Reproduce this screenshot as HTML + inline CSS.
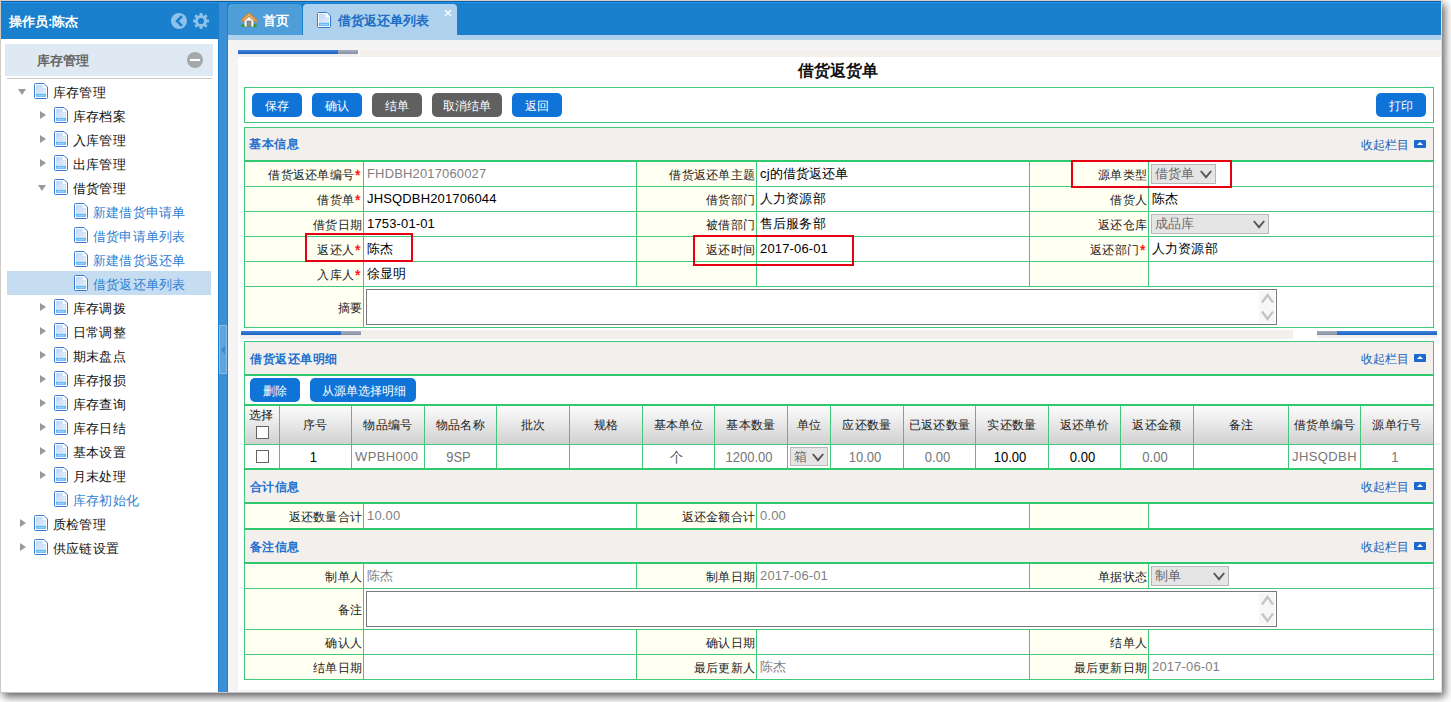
<!DOCTYPE html>
<html><head><meta charset="utf-8">
<style>
*{box-sizing:border-box;margin:0;padding:0}
html,body{width:1451px;height:702px;overflow:hidden;background:#fff;font-family:"Liberation Sans",sans-serif;font-size:12px;color:#111}
.abs{position:absolute}
#frame-top{left:0;top:0;width:1443px;height:1px;background:#d6d0c8}
#frame-left{left:0;top:0;width:1px;height:693px;background:#cfcac4}
#shadowbox{left:0;top:0;width:1442px;height:693px;background:#fff;box-shadow:3px 4px 8px 0 rgba(0,0,0,.6)}
#frame-right{left:1441px;top:0;width:1px;height:693px;background:#e2deda}
#frame-bottom{left:0;top:692px;width:1442px;height:1px;background:#c4c4c4}
#win{left:1px;top:1px;width:1440px;height:691px;background:#fff;overflow:hidden}
/* all coordinates inside #win are offset by 1 */
#topline1{left:0;top:0;width:1441px;height:1px;background:#0b5ea6}
#topline2{left:0;top:1px;width:1441px;height:1px;background:#2594e8}
#sbhead{left:0;top:2px;width:217px;height:36px;background:#1a7fcc;color:#fff;font-weight:bold;font-size:13px}
#sbhead .t{position:absolute;left:8px;top:11px;line-height:15px}
#splitter{left:217px;top:2px;width:10px;height:690px;background:#3b8fd5;border-left:1px solid #1c7fd0;border-right:1px solid #1c7fd0}
#tabbar{left:227px;top:2px;width:1214px;height:32px;background:#1a7fcc}
.tab{position:absolute;top:1px;height:32px;border-radius:4px 4px 0 0;font-weight:bold;font-size:13px;line-height:15px}
#tab1{left:0;width:74px;background:#4f9dd9;color:#fff}
#tab2{left:75px;width:154px;background:#aed2ee;color:#1a6ec4}
#bluband{left:227px;top:34px;width:1214px;height:5px;background:#aed2ee}
#content{left:227px;top:39px;width:1214px;height:653px;background:#f4f4f4}
#panel{left:237px;top:56px;width:1204px;height:633px;background:#fff}
#sidebar{left:0;top:38px;width:217px;height:654px;background:#fff}
#acc{left:4px;top:5px;width:208px;height:32px;background:#dfe9f3;color:#666;font-size:13px;font-weight:bold}
#accline{left:6px;top:39px;width:205px;height:1px;background:#c8c8c8}
.row{position:absolute;left:0;width:217px;height:24px;font-size:13px;line-height:24px;white-space:nowrap}
.row .tx{position:absolute;top:2px;letter-spacing:0.2px}
.row.sel{left:6px;width:204px;background:#c6ddf1}
.leaf{color:#2f80d2}
.tri-d{position:absolute;width:0;height:0;border-left:4.5px solid transparent;border-right:4.5px solid transparent;border-top:6px solid #999;top:10px}
.tri-r{position:absolute;width:0;height:0;border-top:4.5px solid transparent;border-bottom:4.5px solid transparent;border-left:6px solid #999;top:8px}
.doc{position:absolute;top:4px;width:14px;height:16px}
.bar{position:absolute;height:4px}
.gb{border:1px solid #41c87a}
.btn{position:absolute;top:5px;height:24px;border-radius:5px;color:#fff;font-size:12px;line-height:24px;text-align:center}
.bb{background:#0e6fd4}
.bg{background:#606060}
.sec{position:absolute;left:243px;width:1190px;border:1px solid #41c87a;background:#fff}
.sh{position:relative;height:32px;background:#f2efec;border-bottom:2px solid #41c87a}
.sh .t{position:absolute;left:5px;top:9px;color:#2b6fc6;font-weight:bold;font-size:13px;line-height:15px}
.sh .c{position:absolute;right:7px;top:9px;color:#2060b8;font-size:12px;line-height:15px}
.sh .c i{display:inline-block;width:12px;height:8px;background:#1c6ad0;margin-left:5px;vertical-align:1px;position:relative;border-radius:1px}
.sh .c i:after{content:"";position:absolute;left:3px;top:2px;border-left:3px solid transparent;border-right:3px solid transparent;border-bottom:3px solid #fff}
table.f{border-collapse:collapse;table-layout:fixed;width:1190px}
table.f td{border:1px solid #41c87a;height:25px;padding:0 4px;font-size:13px;white-space:nowrap;overflow:hidden}
table.f tr:first-child td{border-top:0}
table.f td:first-child{border-left:0}
table.f td:last-child{border-right:0}
table.f tr:last-child td{border-bottom:0}
table.f td.l{background:#fffff0;text-align:right;font-size:12px;padding:0 2px 0 0;color:#222}
.req{color:#f00}
.gray{color:#777}
.sel-box{display:inline-block;height:20px;border:1px solid #b5b5b5;background:#e6e6e6;color:#888;font-size:13px;line-height:18px;padding-left:3px;position:relative;vertical-align:middle}
.sel-box:after{content:"";position:absolute;right:6px;top:4px;width:7px;height:7px;border-right:2px solid #555;border-bottom:2px solid #555;transform:rotate(45deg)}
.ta{display:block;height:37px;border:1px solid #777;background:#fff;position:relative;margin-left:0}
.redbox{position:absolute;border:2px solid #e0141e}

.tx{position:absolute;white-space:nowrap}
.lab{font-size:12px;line-height:14px;color:#1a1a1a;letter-spacing:0.25px}
.val{font-size:13px;line-height:16px;color:#000;letter-spacing:0.15px}
.val.gray{color:#7f7f7f}
.num{font-size:14px;line-height:16px;transform:scaleX(.93)}
.req{color:#f00;font-size:14px;line-height:14px;-webkit-text-stroke:0.3px #f00}
.btn{position:absolute;border-radius:5px;color:#fff;font-size:12px;line-height:26px;text-align:center}
.selbox{position:absolute;height:20px;border:1px solid #b8b8b8;background:#e5e5e5;color:#6a6a6a;font-size:13px;line-height:18px;padding-left:3px;box-sizing:border-box}
.ta{position:absolute;border:1px solid #7a7a7a;background:#fff;box-sizing:border-box}
.cb{position:absolute;width:13px;height:13px;border:1px solid #666;background:#fff;box-sizing:border-box}
.cico{position:absolute;width:12px;height:8px;background:#1c6ad0;border-radius:1px}
.cico:after{content:"";position:absolute;left:3px;top:2px;border-left:3px solid transparent;border-right:3px solid transparent;border-bottom:3px solid #fff}
.redbox{position:absolute;border:2px solid #e60012;box-sizing:border-box}
</style></head><body>
<svg width="0" height="0" style="position:absolute"><defs>
<linearGradient id="dg" x1="0" y1="0" x2="1" y2="1"><stop offset="0" stop-color="#c0d8f5"/><stop offset="1" stop-color="#e2eefb"/></linearGradient>

</defs></svg>
<div id="shadowbox" class="abs"></div>
<div id="frame-top" class="abs"></div>
<div id="frame-left" class="abs"></div>
<div id="frame-right" class="abs"></div>
<div id="frame-bottom" class="abs"></div>
<div id="win" class="abs">
  <div id="sidebar" class="abs">
    <div id="acc" class="abs"><span style="position:absolute;left:32px;top:9px;line-height:15px">库存管理</span>
      <span style="position:absolute;left:182px;top:8px;width:16px;height:16px;border-radius:50%;background:#a6a9ac"><span style="position:absolute;left:3px;top:7px;width:10px;height:2px;background:#fff"></span></span>
    </div>
    <div id="accline" class="abs"></div>
    <div class="row" style="top:40px"><span class="tri-d" style="left:17px"></span><svg class="doc" style="left:33px" width="14" height="16" viewBox="0 0 14 16"><path d="M1.6,0.5 H10 L13.5,4 V14.4 Q13.5,15.5 12.4,15.5 H1.6 Q0.5,15.5 0.5,14.4 V1.6 Q0.5,0.5 1.6,0.5 Z" fill="#fff" stroke="#3b78cf" stroke-width="1"/>
<path d="M2,2 H9 V5 H12 V10.8 H2 Z" fill="url(#dg)"/>
<rect x="2" y="10.8" width="10" height="3" fill="#55b2f2"/>
<rect x="3" y="11.8" width="8" height="1" fill="#a6dafc"/></svg><span class="tx" style="left:52px">库存管理</span></div>
<div class="row" style="top:64px"><span class="tri-r" style="left:39px"></span><svg class="doc" style="left:53px" width="14" height="16" viewBox="0 0 14 16"><path d="M1.6,0.5 H10 L13.5,4 V14.4 Q13.5,15.5 12.4,15.5 H1.6 Q0.5,15.5 0.5,14.4 V1.6 Q0.5,0.5 1.6,0.5 Z" fill="#fff" stroke="#3b78cf" stroke-width="1"/>
<path d="M2,2 H9 V5 H12 V10.8 H2 Z" fill="url(#dg)"/>
<rect x="2" y="10.8" width="10" height="3" fill="#55b2f2"/>
<rect x="3" y="11.8" width="8" height="1" fill="#a6dafc"/></svg><span class="tx" style="left:72px">库存档案</span></div>
<div class="row" style="top:88px"><span class="tri-r" style="left:39px"></span><svg class="doc" style="left:53px" width="14" height="16" viewBox="0 0 14 16"><path d="M1.6,0.5 H10 L13.5,4 V14.4 Q13.5,15.5 12.4,15.5 H1.6 Q0.5,15.5 0.5,14.4 V1.6 Q0.5,0.5 1.6,0.5 Z" fill="#fff" stroke="#3b78cf" stroke-width="1"/>
<path d="M2,2 H9 V5 H12 V10.8 H2 Z" fill="url(#dg)"/>
<rect x="2" y="10.8" width="10" height="3" fill="#55b2f2"/>
<rect x="3" y="11.8" width="8" height="1" fill="#a6dafc"/></svg><span class="tx" style="left:72px">入库管理</span></div>
<div class="row" style="top:112px"><span class="tri-r" style="left:39px"></span><svg class="doc" style="left:53px" width="14" height="16" viewBox="0 0 14 16"><path d="M1.6,0.5 H10 L13.5,4 V14.4 Q13.5,15.5 12.4,15.5 H1.6 Q0.5,15.5 0.5,14.4 V1.6 Q0.5,0.5 1.6,0.5 Z" fill="#fff" stroke="#3b78cf" stroke-width="1"/>
<path d="M2,2 H9 V5 H12 V10.8 H2 Z" fill="url(#dg)"/>
<rect x="2" y="10.8" width="10" height="3" fill="#55b2f2"/>
<rect x="3" y="11.8" width="8" height="1" fill="#a6dafc"/></svg><span class="tx" style="left:72px">出库管理</span></div>
<div class="row" style="top:136px"><span class="tri-d" style="left:37px"></span><svg class="doc" style="left:53px" width="14" height="16" viewBox="0 0 14 16"><path d="M1.6,0.5 H10 L13.5,4 V14.4 Q13.5,15.5 12.4,15.5 H1.6 Q0.5,15.5 0.5,14.4 V1.6 Q0.5,0.5 1.6,0.5 Z" fill="#fff" stroke="#3b78cf" stroke-width="1"/>
<path d="M2,2 H9 V5 H12 V10.8 H2 Z" fill="url(#dg)"/>
<rect x="2" y="10.8" width="10" height="3" fill="#55b2f2"/>
<rect x="3" y="11.8" width="8" height="1" fill="#a6dafc"/></svg><span class="tx" style="left:72px">借货管理</span></div>
<div class="row" style="top:160px"><svg class="doc" style="left:73px" width="14" height="16" viewBox="0 0 14 16"><path d="M1.6,0.5 H10 L13.5,4 V14.4 Q13.5,15.5 12.4,15.5 H1.6 Q0.5,15.5 0.5,14.4 V1.6 Q0.5,0.5 1.6,0.5 Z" fill="#fff" stroke="#3b78cf" stroke-width="1"/>
<path d="M2,2 H9 V5 H12 V10.8 H2 Z" fill="url(#dg)"/>
<rect x="2" y="10.8" width="10" height="3" fill="#55b2f2"/>
<rect x="3" y="11.8" width="8" height="1" fill="#a6dafc"/></svg><span class="tx leaf" style="left:92px">新建借货申请单</span></div>
<div class="row" style="top:184px"><svg class="doc" style="left:73px" width="14" height="16" viewBox="0 0 14 16"><path d="M1.6,0.5 H10 L13.5,4 V14.4 Q13.5,15.5 12.4,15.5 H1.6 Q0.5,15.5 0.5,14.4 V1.6 Q0.5,0.5 1.6,0.5 Z" fill="#fff" stroke="#3b78cf" stroke-width="1"/>
<path d="M2,2 H9 V5 H12 V10.8 H2 Z" fill="url(#dg)"/>
<rect x="2" y="10.8" width="10" height="3" fill="#55b2f2"/>
<rect x="3" y="11.8" width="8" height="1" fill="#a6dafc"/></svg><span class="tx leaf" style="left:92px">借货申请单列表</span></div>
<div class="row" style="top:208px"><svg class="doc" style="left:73px" width="14" height="16" viewBox="0 0 14 16"><path d="M1.6,0.5 H10 L13.5,4 V14.4 Q13.5,15.5 12.4,15.5 H1.6 Q0.5,15.5 0.5,14.4 V1.6 Q0.5,0.5 1.6,0.5 Z" fill="#fff" stroke="#3b78cf" stroke-width="1"/>
<path d="M2,2 H9 V5 H12 V10.8 H2 Z" fill="url(#dg)"/>
<rect x="2" y="10.8" width="10" height="3" fill="#55b2f2"/>
<rect x="3" y="11.8" width="8" height="1" fill="#a6dafc"/></svg><span class="tx leaf" style="left:92px">新建借货返还单</span></div>
<div class="row" style="top:232px;left:6px;width:204px;background:#c6ddf1"></div>
<div class="row" style="top:232px"><svg class="doc" style="left:73px" width="14" height="16" viewBox="0 0 14 16"><path d="M1.6,0.5 H10 L13.5,4 V14.4 Q13.5,15.5 12.4,15.5 H1.6 Q0.5,15.5 0.5,14.4 V1.6 Q0.5,0.5 1.6,0.5 Z" fill="#fff" stroke="#3b78cf" stroke-width="1"/>
<path d="M2,2 H9 V5 H12 V10.8 H2 Z" fill="url(#dg)"/>
<rect x="2" y="10.8" width="10" height="3" fill="#55b2f2"/>
<rect x="3" y="11.8" width="8" height="1" fill="#a6dafc"/></svg><span class="tx leaf" style="left:92px">借货返还单列表</span></div>
<div class="row" style="top:256px"><span class="tri-r" style="left:39px"></span><svg class="doc" style="left:53px" width="14" height="16" viewBox="0 0 14 16"><path d="M1.6,0.5 H10 L13.5,4 V14.4 Q13.5,15.5 12.4,15.5 H1.6 Q0.5,15.5 0.5,14.4 V1.6 Q0.5,0.5 1.6,0.5 Z" fill="#fff" stroke="#3b78cf" stroke-width="1"/>
<path d="M2,2 H9 V5 H12 V10.8 H2 Z" fill="url(#dg)"/>
<rect x="2" y="10.8" width="10" height="3" fill="#55b2f2"/>
<rect x="3" y="11.8" width="8" height="1" fill="#a6dafc"/></svg><span class="tx" style="left:72px">库存调拨</span></div>
<div class="row" style="top:280px"><span class="tri-r" style="left:39px"></span><svg class="doc" style="left:53px" width="14" height="16" viewBox="0 0 14 16"><path d="M1.6,0.5 H10 L13.5,4 V14.4 Q13.5,15.5 12.4,15.5 H1.6 Q0.5,15.5 0.5,14.4 V1.6 Q0.5,0.5 1.6,0.5 Z" fill="#fff" stroke="#3b78cf" stroke-width="1"/>
<path d="M2,2 H9 V5 H12 V10.8 H2 Z" fill="url(#dg)"/>
<rect x="2" y="10.8" width="10" height="3" fill="#55b2f2"/>
<rect x="3" y="11.8" width="8" height="1" fill="#a6dafc"/></svg><span class="tx" style="left:72px">日常调整</span></div>
<div class="row" style="top:304px"><span class="tri-r" style="left:39px"></span><svg class="doc" style="left:53px" width="14" height="16" viewBox="0 0 14 16"><path d="M1.6,0.5 H10 L13.5,4 V14.4 Q13.5,15.5 12.4,15.5 H1.6 Q0.5,15.5 0.5,14.4 V1.6 Q0.5,0.5 1.6,0.5 Z" fill="#fff" stroke="#3b78cf" stroke-width="1"/>
<path d="M2,2 H9 V5 H12 V10.8 H2 Z" fill="url(#dg)"/>
<rect x="2" y="10.8" width="10" height="3" fill="#55b2f2"/>
<rect x="3" y="11.8" width="8" height="1" fill="#a6dafc"/></svg><span class="tx" style="left:72px">期末盘点</span></div>
<div class="row" style="top:328px"><span class="tri-r" style="left:39px"></span><svg class="doc" style="left:53px" width="14" height="16" viewBox="0 0 14 16"><path d="M1.6,0.5 H10 L13.5,4 V14.4 Q13.5,15.5 12.4,15.5 H1.6 Q0.5,15.5 0.5,14.4 V1.6 Q0.5,0.5 1.6,0.5 Z" fill="#fff" stroke="#3b78cf" stroke-width="1"/>
<path d="M2,2 H9 V5 H12 V10.8 H2 Z" fill="url(#dg)"/>
<rect x="2" y="10.8" width="10" height="3" fill="#55b2f2"/>
<rect x="3" y="11.8" width="8" height="1" fill="#a6dafc"/></svg><span class="tx" style="left:72px">库存报损</span></div>
<div class="row" style="top:352px"><span class="tri-r" style="left:39px"></span><svg class="doc" style="left:53px" width="14" height="16" viewBox="0 0 14 16"><path d="M1.6,0.5 H10 L13.5,4 V14.4 Q13.5,15.5 12.4,15.5 H1.6 Q0.5,15.5 0.5,14.4 V1.6 Q0.5,0.5 1.6,0.5 Z" fill="#fff" stroke="#3b78cf" stroke-width="1"/>
<path d="M2,2 H9 V5 H12 V10.8 H2 Z" fill="url(#dg)"/>
<rect x="2" y="10.8" width="10" height="3" fill="#55b2f2"/>
<rect x="3" y="11.8" width="8" height="1" fill="#a6dafc"/></svg><span class="tx" style="left:72px">库存查询</span></div>
<div class="row" style="top:376px"><span class="tri-r" style="left:39px"></span><svg class="doc" style="left:53px" width="14" height="16" viewBox="0 0 14 16"><path d="M1.6,0.5 H10 L13.5,4 V14.4 Q13.5,15.5 12.4,15.5 H1.6 Q0.5,15.5 0.5,14.4 V1.6 Q0.5,0.5 1.6,0.5 Z" fill="#fff" stroke="#3b78cf" stroke-width="1"/>
<path d="M2,2 H9 V5 H12 V10.8 H2 Z" fill="url(#dg)"/>
<rect x="2" y="10.8" width="10" height="3" fill="#55b2f2"/>
<rect x="3" y="11.8" width="8" height="1" fill="#a6dafc"/></svg><span class="tx" style="left:72px">库存日结</span></div>
<div class="row" style="top:400px"><span class="tri-r" style="left:39px"></span><svg class="doc" style="left:53px" width="14" height="16" viewBox="0 0 14 16"><path d="M1.6,0.5 H10 L13.5,4 V14.4 Q13.5,15.5 12.4,15.5 H1.6 Q0.5,15.5 0.5,14.4 V1.6 Q0.5,0.5 1.6,0.5 Z" fill="#fff" stroke="#3b78cf" stroke-width="1"/>
<path d="M2,2 H9 V5 H12 V10.8 H2 Z" fill="url(#dg)"/>
<rect x="2" y="10.8" width="10" height="3" fill="#55b2f2"/>
<rect x="3" y="11.8" width="8" height="1" fill="#a6dafc"/></svg><span class="tx" style="left:72px">基本设置</span></div>
<div class="row" style="top:424px"><span class="tri-r" style="left:39px"></span><svg class="doc" style="left:53px" width="14" height="16" viewBox="0 0 14 16"><path d="M1.6,0.5 H10 L13.5,4 V14.4 Q13.5,15.5 12.4,15.5 H1.6 Q0.5,15.5 0.5,14.4 V1.6 Q0.5,0.5 1.6,0.5 Z" fill="#fff" stroke="#3b78cf" stroke-width="1"/>
<path d="M2,2 H9 V5 H12 V10.8 H2 Z" fill="url(#dg)"/>
<rect x="2" y="10.8" width="10" height="3" fill="#55b2f2"/>
<rect x="3" y="11.8" width="8" height="1" fill="#a6dafc"/></svg><span class="tx" style="left:72px">月末处理</span></div>
<div class="row" style="top:448px"><svg class="doc" style="left:53px" width="14" height="16" viewBox="0 0 14 16"><path d="M1.6,0.5 H10 L13.5,4 V14.4 Q13.5,15.5 12.4,15.5 H1.6 Q0.5,15.5 0.5,14.4 V1.6 Q0.5,0.5 1.6,0.5 Z" fill="#fff" stroke="#3b78cf" stroke-width="1"/>
<path d="M2,2 H9 V5 H12 V10.8 H2 Z" fill="url(#dg)"/>
<rect x="2" y="10.8" width="10" height="3" fill="#55b2f2"/>
<rect x="3" y="11.8" width="8" height="1" fill="#a6dafc"/></svg><span class="tx leaf" style="left:72px">库存初始化</span></div>
<div class="row" style="top:472px"><span class="tri-r" style="left:19px"></span><svg class="doc" style="left:33px" width="14" height="16" viewBox="0 0 14 16"><path d="M1.6,0.5 H10 L13.5,4 V14.4 Q13.5,15.5 12.4,15.5 H1.6 Q0.5,15.5 0.5,14.4 V1.6 Q0.5,0.5 1.6,0.5 Z" fill="#fff" stroke="#3b78cf" stroke-width="1"/>
<path d="M2,2 H9 V5 H12 V10.8 H2 Z" fill="url(#dg)"/>
<rect x="2" y="10.8" width="10" height="3" fill="#55b2f2"/>
<rect x="3" y="11.8" width="8" height="1" fill="#a6dafc"/></svg><span class="tx" style="left:52px">质检管理</span></div>
<div class="row" style="top:496px"><span class="tri-r" style="left:19px"></span><svg class="doc" style="left:33px" width="14" height="16" viewBox="0 0 14 16"><path d="M1.6,0.5 H10 L13.5,4 V14.4 Q13.5,15.5 12.4,15.5 H1.6 Q0.5,15.5 0.5,14.4 V1.6 Q0.5,0.5 1.6,0.5 Z" fill="#fff" stroke="#3b78cf" stroke-width="1"/>
<path d="M2,2 H9 V5 H12 V10.8 H2 Z" fill="url(#dg)"/>
<rect x="2" y="10.8" width="10" height="3" fill="#55b2f2"/>
<rect x="3" y="11.8" width="8" height="1" fill="#a6dafc"/></svg><span class="tx" style="left:52px">供应链设置</span></div>

  </div>
  <div id="topline1" class="abs"></div>
  <div id="topline2" class="abs"></div>
  <div id="sbhead" class="abs"><span class="t">操作员:陈杰</span>
    <svg style="position:absolute;left:169px;top:9px" width="18" height="18" viewBox="0 0 18 18"><circle cx="9" cy="9" r="8" fill="#8fc2ea"/><path d="M11,5 L7,9 L11,13" fill="none" stroke="#1a7fcc" stroke-width="2.6" stroke-linecap="square"/></svg>
<svg style="position:absolute;left:191px;top:9px" width="18" height="18" viewBox="0 0 18 18"><g fill="#8fc2ea"><circle cx="9" cy="9" r="6"/><rect x="7.6" y="1" width="2.8" height="3"/><rect x="7.6" y="14" width="2.8" height="3"/><rect x="1" y="7.6" width="3" height="2.8"/><rect x="14" y="7.6" width="3" height="2.8"/><g transform="rotate(45 9 9)"><rect x="7.6" y="1" width="2.8" height="3"/><rect x="7.6" y="14" width="2.8" height="3"/><rect x="1" y="7.6" width="3" height="2.8"/><rect x="14" y="7.6" width="3" height="2.8"/></g></g><circle cx="9" cy="9" r="3.1" fill="#1a7fcc"/></svg>
  </div>
  <div id="splitter" class="abs"></div>
  <div class="abs" style="left:218px;top:324px;width:8px;height:49px;background:#5ea4de;border:1px solid #86bde9;box-sizing:border-box"></div>
  <svg class="abs" style="left:219px;top:343px" width="6" height="12" viewBox="0 0 6 12"><path d="M1,6 L5,1.5 L5,10.5 Z" fill="#3a8ad3"/></svg>
  <div id="tabbar" class="abs">
    <div id="tab1" class="tab"><span style="position:absolute;left:35px;top:9px">首页</span><svg style="position:absolute;left:13px;top:8px" width="16" height="16" viewBox="0 0 16 16"><ellipse cx="2.8" cy="13.6" rx="2.8" ry="1.7" fill="#3d9a2e"/><ellipse cx="13.2" cy="13.6" rx="2.8" ry="1.7" fill="#3d9a2e"/><path d="M3.6,7.5 L8,3.5 L12.4,7.5 V14.6 H3.6 Z" fill="#fafafa"/><rect x="6" y="9" width="4" height="5.6" fill="#8d8d8d" stroke="#6a6a6a" stroke-width="0.6"/><path d="M0.8,9 L8,2.4 L15.2,9" fill="none" stroke="#c98a3e" stroke-width="3.6" stroke-linejoin="round" stroke-linecap="round"/><path d="M1.8,8.4 L8,2.8 L14.2,8.4" fill="none" stroke="#eab877" stroke-width="1.2"/></svg></div>
    <div id="tab2" class="tab"><span style="position:absolute;left:35px;top:9px">借货返还单列表</span><svg style="position:absolute;left:141px;top:5px" width="8" height="8" viewBox="0 0 8 8"><path d="M1,1 L7,7 M7,1 L1,7" stroke="#fff" stroke-width="1.25"/></svg><svg class="doc" style="position:absolute;left:14px;top:8px" width="14" height="16" viewBox="0 0 14 16"><path d="M1.6,0.5 H10 L13.5,4 V14.4 Q13.5,15.5 12.4,15.5 H1.6 Q0.5,15.5 0.5,14.4 V1.6 Q0.5,0.5 1.6,0.5 Z" fill="#fff" stroke="#3b78cf" stroke-width="1"/>
<path d="M2,2 H9 V5 H12 V10.8 H2 Z" fill="url(#dg)"/>
<rect x="2" y="10.8" width="10" height="3" fill="#55b2f2"/>
<rect x="3" y="11.8" width="8" height="1" fill="#a6dafc"/></svg></div>
  </div>
  <div id="bluband" class="abs"></div>
  <div id="content" class="abs"></div>
  <div id="panel" class="abs"></div>
  <div id="main" style="position:absolute;left:-1px;top:-1px;width:1451px;height:702px"><span class="tx " style="left:237px;width:1201px;text-align:center;top:61px;font-size:16px;font-weight:bold;line-height:20px">借货返货单</span>
<div style="position:absolute;left:244px;top:87px;width:1190px;height:36px;border:1px solid #41c87a;box-sizing:border-box"></div>
<div class="btn" style="left:252px;top:93px;width:50px;height:24px;background:#0f73d7">保存</div>
<div class="btn" style="left:312px;top:93px;width:50px;height:24px;background:#0f73d7">确认</div>
<div class="btn" style="left:372px;top:93px;width:50px;height:24px;background:#606060">结单</div>
<div class="btn" style="left:432px;top:93px;width:70px;height:24px;background:#606060">取消结单</div>
<div class="btn" style="left:512px;top:93px;width:50px;height:24px;background:#0f73d7">返回</div>
<div class="btn" style="left:1376px;top:93px;width:50px;height:24px;background:#0f73d7">打印</div>
<div style="position:absolute;left:245px;top:128px;width:1188px;height:32px;background:#f2efec"></div>
<div style="position:absolute;left:244px;top:160px;width:1190px;height:2px;background:#2fc86f"></div>
<span class="tx " style="left:249px;top:137px;font-size:12px;font-weight:bold;color:#2270cf;line-height:15px;letter-spacing:0.5px">基本信息</span>
<span class="tx " style="right:42px;top:138px;font-size:12px;color:#2060b8;line-height:14px">收起栏目</span>
<span class="cico" style="left:1414px;top:140px"></span>
<div style="position:absolute;left:245px;top:162px;width:118px;height:25px;background:#fffff2"></div>
<div style="position:absolute;left:637px;top:162px;width:119px;height:25px;background:#fffff2"></div>
<div style="position:absolute;left:1030px;top:162px;width:118px;height:25px;background:#fffff2"></div>
<div style="position:absolute;left:363px;top:162px;width:1px;height:25px;background:#41c87a"></div>
<div style="position:absolute;left:636px;top:162px;width:1px;height:25px;background:#41c87a"></div>
<div style="position:absolute;left:756px;top:162px;width:1px;height:25px;background:#41c87a"></div>
<div style="position:absolute;left:1029px;top:162px;width:1px;height:25px;background:#41c87a"></div>
<div style="position:absolute;left:1148px;top:162px;width:1px;height:25px;background:#41c87a"></div>
<span class="tx lab" style="right:1097px;top:168px">借货返还单编号</span><span class="tx req" style="left:355px;top:168px">*</span>
<span class="tx val gray" style="left:367px;top:166px">FHDBH2017060027</span>
<span class="tx lab" style="right:696px;top:168px">借货返还单主题</span>
<span class="tx val" style="left:760px;top:166px">cj的借货返还单</span>
<span class="tx lab" style="right:304px;top:168px">源单类型</span>
<span class="selbox" style="left:1151px;top:164px;width:65px">借货单<svg style="position:absolute;right:3px;top:5px" width="12" height="9" viewBox="0 0 12 9"><path d="M0.8,1 L6,7.2 L11.2,1" fill="none" stroke="#555" stroke-width="1.9"/></svg></span>
<div style="position:absolute;left:245px;top:187px;width:118px;height:25px;background:#fffff2"></div>
<div style="position:absolute;left:637px;top:187px;width:119px;height:25px;background:#fffff2"></div>
<div style="position:absolute;left:1030px;top:187px;width:118px;height:25px;background:#fffff2"></div>
<div style="position:absolute;left:363px;top:187px;width:1px;height:25px;background:#41c87a"></div>
<div style="position:absolute;left:636px;top:187px;width:1px;height:25px;background:#41c87a"></div>
<div style="position:absolute;left:756px;top:187px;width:1px;height:25px;background:#41c87a"></div>
<div style="position:absolute;left:1029px;top:187px;width:1px;height:25px;background:#41c87a"></div>
<div style="position:absolute;left:1148px;top:187px;width:1px;height:25px;background:#41c87a"></div>
<span class="tx lab" style="right:1097px;top:193px">借货单</span><span class="tx req" style="left:355px;top:193px">*</span>
<span class="tx val" style="left:367px;top:191px">JHSQDBH201706044</span>
<span class="tx lab" style="right:696px;top:193px">借货部门</span>
<span class="tx val" style="left:760px;top:191px">人力资源部</span>
<span class="tx lab" style="right:304px;top:193px">借货人</span>
<span class="tx val" style="left:1152px;top:191px">陈杰</span>
<div style="position:absolute;left:245px;top:212px;width:118px;height:25px;background:#fffff2"></div>
<div style="position:absolute;left:637px;top:212px;width:119px;height:25px;background:#fffff2"></div>
<div style="position:absolute;left:1030px;top:212px;width:118px;height:25px;background:#fffff2"></div>
<div style="position:absolute;left:363px;top:212px;width:1px;height:25px;background:#41c87a"></div>
<div style="position:absolute;left:636px;top:212px;width:1px;height:25px;background:#41c87a"></div>
<div style="position:absolute;left:756px;top:212px;width:1px;height:25px;background:#41c87a"></div>
<div style="position:absolute;left:1029px;top:212px;width:1px;height:25px;background:#41c87a"></div>
<div style="position:absolute;left:1148px;top:212px;width:1px;height:25px;background:#41c87a"></div>
<span class="tx lab" style="right:1089px;top:218px">借货日期</span>
<span class="tx val" style="left:367px;top:216px">1753-01-01</span>
<span class="tx lab" style="right:696px;top:218px">被借部门</span>
<span class="tx val" style="left:760px;top:216px">售后服务部</span>
<span class="tx lab" style="right:304px;top:218px">返还仓库</span>
<span class="selbox" style="left:1151px;top:214px;width:118px">成品库<svg style="position:absolute;right:3px;top:5px" width="12" height="9" viewBox="0 0 12 9"><path d="M0.8,1 L6,7.2 L11.2,1" fill="none" stroke="#555" stroke-width="1.9"/></svg></span>
<div style="position:absolute;left:245px;top:237px;width:118px;height:25px;background:#fffff2"></div>
<div style="position:absolute;left:637px;top:237px;width:119px;height:25px;background:#fffff2"></div>
<div style="position:absolute;left:1030px;top:237px;width:118px;height:25px;background:#fffff2"></div>
<div style="position:absolute;left:363px;top:237px;width:1px;height:25px;background:#41c87a"></div>
<div style="position:absolute;left:636px;top:237px;width:1px;height:25px;background:#41c87a"></div>
<div style="position:absolute;left:756px;top:237px;width:1px;height:25px;background:#41c87a"></div>
<div style="position:absolute;left:1029px;top:237px;width:1px;height:25px;background:#41c87a"></div>
<div style="position:absolute;left:1148px;top:237px;width:1px;height:25px;background:#41c87a"></div>
<span class="tx lab" style="right:1097px;top:243px">返还人</span><span class="tx req" style="left:355px;top:243px">*</span>
<span class="tx val" style="left:367px;top:241px">陈杰</span>
<span class="tx lab" style="right:696px;top:243px">返还时间</span>
<span class="tx val" style="left:760px;top:241px">2017-06-01</span>
<span class="tx lab" style="right:312px;top:243px">返还部门</span><span class="tx req" style="left:1140px;top:243px">*</span>
<span class="tx val" style="left:1152px;top:241px">人力资源部</span>
<div style="position:absolute;left:245px;top:262px;width:118px;height:25px;background:#fffff2"></div>
<div style="position:absolute;left:637px;top:262px;width:119px;height:25px;background:#fffff2"></div>
<div style="position:absolute;left:1030px;top:262px;width:118px;height:25px;background:#fffff2"></div>
<div style="position:absolute;left:363px;top:262px;width:1px;height:25px;background:#41c87a"></div>
<div style="position:absolute;left:636px;top:262px;width:1px;height:25px;background:#41c87a"></div>
<div style="position:absolute;left:756px;top:262px;width:1px;height:25px;background:#41c87a"></div>
<div style="position:absolute;left:1029px;top:262px;width:1px;height:25px;background:#41c87a"></div>
<div style="position:absolute;left:1148px;top:262px;width:1px;height:25px;background:#41c87a"></div>
<span class="tx lab" style="right:1097px;top:268px">入库人</span><span class="tx req" style="left:355px;top:268px">*</span>
<span class="tx val" style="left:367px;top:266px">徐显明</span>
<div style="position:absolute;left:245px;top:287px;width:118px;height:41px;background:#fffff2"></div>
<div style="position:absolute;left:363px;top:287px;width:1px;height:41px;background:#41c87a"></div>
<span class="tx lab" style="right:1089px;top:301px">摘要</span>
<span class="ta" style="left:366px;top:289px;width:911px;height:36px"><span style="position:absolute;left:892px;top:1px;width:16px;height:32px;background:#f7f7f7"></span><svg style="position:absolute;left:892px;top:1px" width="16" height="32" viewBox="0 0 16 32"><path d="M3,11.5 L8.5,4 L14,11.5 M3,20.5 L8.5,28 L14,20.5" fill="none" stroke="#c4c4c4" stroke-width="2.3"/></svg></span>
<div style="position:absolute;left:244px;top:186px;width:1190px;height:1px;background:#41c87a"></div>
<div style="position:absolute;left:244px;top:211px;width:1190px;height:1px;background:#41c87a"></div>
<div style="position:absolute;left:244px;top:236px;width:1190px;height:1px;background:#41c87a"></div>
<div style="position:absolute;left:244px;top:261px;width:1190px;height:1px;background:#41c87a"></div>
<div style="position:absolute;left:244px;top:286px;width:1190px;height:1px;background:#41c87a"></div>
<div style="position:absolute;left:244px;top:127px;width:1190px;height:201px;border:1px solid #41c87a;box-sizing:border-box"></div>
<div style="position:absolute;left:238px;top:50px;width:1203px;height:7px;background:#f3f0ec"></div>
<div style="position:absolute;left:238px;top:54px;width:122px;height:3px;background:#efefef"></div>
<div style="position:absolute;left:358px;top:50px;width:2px;height:7px;background:#f8f8f8"></div>
<div style="position:absolute;left:238px;top:50px;width:100px;height:4px;background:linear-gradient(#3f86db,#1f5fc0)"></div>
<div style="position:absolute;left:338px;top:50px;width:20px;height:4px;background:linear-gradient(#a6afbd,#8690a3)"></div>
<div style="position:absolute;left:361px;top:330px;width:932px;height:9px;background:#f3f0ec"></div>
<div style="position:absolute;left:240px;top:335px;width:121px;height:4px;background:#efefef"></div>
<div style="position:absolute;left:241px;top:331px;width:100px;height:4px;background:linear-gradient(#3f86db,#1f5fc0)"></div>
<div style="position:absolute;left:341px;top:331px;width:20px;height:4px;background:linear-gradient(#a6afbd,#8690a3)"></div>
<div style="position:absolute;left:1317px;top:335px;width:120px;height:3px;background:#efefef"></div>
<div style="position:absolute;left:1317px;top:331px;width:20px;height:4px;background:linear-gradient(#a6afbd,#8690a3)"></div>
<div style="position:absolute;left:1337px;top:331px;width:100px;height:4px;background:linear-gradient(#3f86db,#1f5fc0)"></div>
<div style="position:absolute;left:245px;top:342px;width:1188px;height:32px;background:#f2efec"></div>
<div style="position:absolute;left:244px;top:374px;width:1190px;height:2px;background:#2fc86f"></div>
<span class="tx " style="left:250px;top:352px;font-size:12px;font-weight:bold;color:#2270cf;line-height:15px;letter-spacing:0.5px">借货返还单明细</span>
<span class="tx " style="right:42px;top:352px;font-size:12px;color:#2060b8;line-height:14px">收起栏目</span>
<span class="cico" style="left:1414px;top:354px"></span>
<div class="btn" style="left:250px;top:378px;width:50px;height:24px;background:#0f73d7">删除</div>
<div class="btn" style="left:310px;top:378px;width:106px;height:24px;background:#0f73d7;text-indent:2px">从源单选择明细</div>
<div style="position:absolute;left:244px;top:404px;width:1190px;height:2px;background:#2fc86f"></div>
<div style="position:absolute;left:245px;top:406px;width:1188px;height:38px;background:linear-gradient(#fbfbfb,#f0f0f0 30%,#d0d0d0)"></div>
<div style="position:absolute;left:244px;top:444px;width:1190px;height:1px;background:#41c87a"></div>
<div style="position:absolute;left:279px;top:406px;width:1px;height:62px;background:#41c87a"></div>
<span class="tx " style="left:245px;width:33px;text-align:center;top:408px;font-size:12px;line-height:14px;letter-spacing:0.4px">选择</span>
<span class="cb" style="left:256px;top:426px"></span>
<div style="position:absolute;left:351px;top:406px;width:1px;height:62px;background:#41c87a"></div>
<span class="tx " style="left:280px;width:71px;text-align:center;top:418px;font-size:12px;line-height:14px;color:#222;letter-spacing:0.4px">序号</span>
<div style="position:absolute;left:424px;top:406px;width:1px;height:62px;background:#41c87a"></div>
<span class="tx " style="left:352px;width:72px;text-align:center;top:418px;font-size:12px;line-height:14px;color:#222;letter-spacing:0.4px">物品编号</span>
<div style="position:absolute;left:496px;top:406px;width:1px;height:62px;background:#41c87a"></div>
<span class="tx " style="left:425px;width:71px;text-align:center;top:418px;font-size:12px;line-height:14px;color:#222;letter-spacing:0.4px">物品名称</span>
<div style="position:absolute;left:569px;top:406px;width:1px;height:62px;background:#41c87a"></div>
<span class="tx " style="left:497px;width:72px;text-align:center;top:418px;font-size:12px;line-height:14px;color:#222;letter-spacing:0.4px">批次</span>
<div style="position:absolute;left:642px;top:406px;width:1px;height:62px;background:#41c87a"></div>
<span class="tx " style="left:570px;width:72px;text-align:center;top:418px;font-size:12px;line-height:14px;color:#222;letter-spacing:0.4px">规格</span>
<div style="position:absolute;left:714px;top:406px;width:1px;height:62px;background:#41c87a"></div>
<span class="tx " style="left:643px;width:71px;text-align:center;top:418px;font-size:12px;line-height:14px;color:#222;letter-spacing:0.4px">基本单位</span>
<div style="position:absolute;left:787px;top:406px;width:1px;height:62px;background:#41c87a"></div>
<span class="tx " style="left:715px;width:72px;text-align:center;top:418px;font-size:12px;line-height:14px;color:#222;letter-spacing:0.4px">基本数量</span>
<div style="position:absolute;left:830px;top:406px;width:1px;height:62px;background:#41c87a"></div>
<span class="tx " style="left:788px;width:42px;text-align:center;top:418px;font-size:12px;line-height:14px;color:#222;letter-spacing:0.4px">单位</span>
<div style="position:absolute;left:903px;top:406px;width:1px;height:62px;background:#41c87a"></div>
<span class="tx " style="left:831px;width:72px;text-align:center;top:418px;font-size:12px;line-height:14px;color:#222;letter-spacing:0.4px">应还数量</span>
<div style="position:absolute;left:975px;top:406px;width:1px;height:62px;background:#41c87a"></div>
<span class="tx " style="left:904px;width:71px;text-align:center;top:418px;font-size:12px;line-height:14px;color:#222;letter-spacing:0.4px">已返还数量</span>
<div style="position:absolute;left:1048px;top:406px;width:1px;height:62px;background:#41c87a"></div>
<span class="tx " style="left:976px;width:72px;text-align:center;top:418px;font-size:12px;line-height:14px;color:#222;letter-spacing:0.4px">实还数量</span>
<div style="position:absolute;left:1120px;top:406px;width:1px;height:62px;background:#41c87a"></div>
<span class="tx " style="left:1049px;width:71px;text-align:center;top:418px;font-size:12px;line-height:14px;color:#222;letter-spacing:0.4px">返还单价</span>
<div style="position:absolute;left:1193px;top:406px;width:1px;height:62px;background:#41c87a"></div>
<span class="tx " style="left:1121px;width:72px;text-align:center;top:418px;font-size:12px;line-height:14px;color:#222;letter-spacing:0.4px">返还金额</span>
<div style="position:absolute;left:1288px;top:406px;width:1px;height:62px;background:#41c87a"></div>
<span class="tx " style="left:1194px;width:94px;text-align:center;top:418px;font-size:12px;line-height:14px;color:#222;letter-spacing:0.4px">备注</span>
<div style="position:absolute;left:1360px;top:406px;width:1px;height:62px;background:#41c87a"></div>
<span class="tx " style="left:1289px;width:71px;text-align:center;top:418px;font-size:12px;line-height:14px;color:#222;letter-spacing:0.4px">借货单编号</span>
<span class="tx " style="left:1361px;width:72px;text-align:center;top:418px;font-size:12px;line-height:14px;color:#222;letter-spacing:0.4px">源单行号</span>
<span class="cb" style="left:256px;top:450px"></span>
<span class="tx num" style="left:280px;width:67px;text-align:center;top:449px;color:#000">1</span>
<span class="tx val" style="left:355px;top:449px;color:#777;width:65px;overflow:hidden;letter-spacing:0.4px">WPBH000</span>
<span class="tx num" style="left:425px;width:67px;text-align:center;top:449px;color:#777">9SP</span>
<span class="tx num" style="left:643px;width:67px;text-align:center;top:449px;color:#555">个</span>
<span class="tx num" style="left:715px;width:68px;text-align:center;top:449px;color:#777">1200.00</span>
<span class="selbox" style="left:790px;top:447px;width:38px;height:19px;line-height:17px">箱<svg style="position:absolute;right:3px;top:5px" width="12" height="9" viewBox="0 0 12 9"><path d="M0.8,1 L6,7.2 L11.2,1" fill="none" stroke="#555" stroke-width="1.9"/></svg></span>
<span class="tx num" style="left:831px;width:68px;text-align:center;top:449px;color:#777">10.00</span>
<span class="tx num" style="left:904px;width:67px;text-align:center;top:449px;color:#777">0.00</span>
<span class="tx num" style="left:976px;width:68px;text-align:center;top:449px;color:#000">10.00</span>
<span class="tx num" style="left:1049px;width:67px;text-align:center;top:449px;color:#000">0.00</span>
<span class="tx num" style="left:1121px;width:68px;text-align:center;top:449px;color:#777">0.00</span>
<span class="tx val" style="left:1292px;top:449px;color:#777;width:64px;overflow:hidden;letter-spacing:0.4px">JHSQDBH</span>
<span class="tx num" style="left:1361px;width:68px;text-align:center;top:449px;color:#777">1</span>
<div style="position:absolute;left:244px;top:468px;width:1190px;height:2px;background:#2fc86f"></div>
<div style="position:absolute;left:244px;top:341px;width:1190px;height:129px;border:1px solid #41c87a;border-bottom:0;box-sizing:border-box"></div>
<div style="position:absolute;left:245px;top:470px;width:1188px;height:32px;background:#f2efec"></div>
<div style="position:absolute;left:244px;top:502px;width:1190px;height:2px;background:#2fc86f"></div>
<span class="tx " style="left:250px;top:480px;font-size:12px;font-weight:bold;color:#2270cf;line-height:15px;letter-spacing:0.4px">合计信息</span>
<span class="tx " style="right:42px;top:480px;font-size:12px;color:#2060b8;line-height:14px">收起栏目</span>
<span class="cico" style="left:1414px;top:482px"></span>
<div style="position:absolute;left:245px;top:504px;width:118px;height:24px;background:#fffff2"></div>
<div style="position:absolute;left:637px;top:504px;width:119px;height:24px;background:#fffff2"></div>
<div style="position:absolute;left:1030px;top:504px;width:118px;height:24px;background:#fffff2"></div>
<div style="position:absolute;left:363px;top:504px;width:1px;height:24px;background:#41c87a"></div>
<div style="position:absolute;left:636px;top:504px;width:1px;height:24px;background:#41c87a"></div>
<div style="position:absolute;left:756px;top:504px;width:1px;height:24px;background:#41c87a"></div>
<div style="position:absolute;left:1029px;top:504px;width:1px;height:24px;background:#41c87a"></div>
<div style="position:absolute;left:1148px;top:504px;width:1px;height:24px;background:#41c87a"></div>
<span class="tx lab" style="right:1089px;top:510px">返还数量合计</span>
<span class="tx val gray" style="left:367px;top:508px">10.00</span>
<span class="tx lab" style="right:696px;top:510px">返还金额合计</span>
<span class="tx val gray" style="left:760px;top:508px">0.00</span>
<div style="position:absolute;left:244px;top:528px;width:1190px;height:2px;background:#2fc86f"></div>
<div style="position:absolute;left:245px;top:530px;width:1188px;height:32px;background:#f2efec"></div>
<div style="position:absolute;left:244px;top:562px;width:1190px;height:2px;background:#2fc86f"></div>
<span class="tx " style="left:250px;top:540px;font-size:12px;font-weight:bold;color:#2270cf;line-height:15px;letter-spacing:0.4px">备注信息</span>
<span class="tx " style="right:42px;top:540px;font-size:12px;color:#2060b8;line-height:14px">收起栏目</span>
<span class="cico" style="left:1414px;top:542px"></span>
<div style="position:absolute;left:245px;top:564px;width:118px;height:25px;background:#fffff2"></div>
<div style="position:absolute;left:637px;top:564px;width:119px;height:25px;background:#fffff2"></div>
<div style="position:absolute;left:1030px;top:564px;width:118px;height:25px;background:#fffff2"></div>
<div style="position:absolute;left:363px;top:564px;width:1px;height:25px;background:#41c87a"></div>
<div style="position:absolute;left:636px;top:564px;width:1px;height:25px;background:#41c87a"></div>
<div style="position:absolute;left:756px;top:564px;width:1px;height:25px;background:#41c87a"></div>
<div style="position:absolute;left:1029px;top:564px;width:1px;height:25px;background:#41c87a"></div>
<div style="position:absolute;left:1148px;top:564px;width:1px;height:25px;background:#41c87a"></div>
<span class="tx lab" style="right:1089px;top:570px">制单人</span>
<span class="tx val gray" style="left:367px;top:568px">陈杰</span>
<span class="tx lab" style="right:696px;top:570px">制单日期</span>
<span class="tx val gray" style="left:760px;top:568px">2017-06-01</span>
<span class="tx lab" style="right:304px;top:570px">单据状态</span>
<span class="selbox" style="left:1151px;top:566px;width:78px">制单<svg style="position:absolute;right:3px;top:5px" width="12" height="9" viewBox="0 0 12 9"><path d="M0.8,1 L6,7.2 L11.2,1" fill="none" stroke="#555" stroke-width="1.9"/></svg></span>
<div style="position:absolute;left:245px;top:589px;width:118px;height:41px;background:#fffff2"></div>
<div style="position:absolute;left:363px;top:589px;width:1px;height:41px;background:#41c87a"></div>
<span class="tx lab" style="right:1089px;top:603px">备注</span>
<span class="ta" style="left:366px;top:591px;width:911px;height:36px"><span style="position:absolute;left:892px;top:1px;width:16px;height:32px;background:#f7f7f7"></span><svg style="position:absolute;left:892px;top:1px" width="16" height="32" viewBox="0 0 16 32"><path d="M3,11.5 L8.5,4 L14,11.5 M3,20.5 L8.5,28 L14,20.5" fill="none" stroke="#c4c4c4" stroke-width="2.3"/></svg></span>
<div style="position:absolute;left:245px;top:630px;width:118px;height:25px;background:#fffff2"></div>
<div style="position:absolute;left:637px;top:630px;width:119px;height:25px;background:#fffff2"></div>
<div style="position:absolute;left:1030px;top:630px;width:118px;height:25px;background:#fffff2"></div>
<div style="position:absolute;left:363px;top:630px;width:1px;height:25px;background:#41c87a"></div>
<div style="position:absolute;left:636px;top:630px;width:1px;height:25px;background:#41c87a"></div>
<div style="position:absolute;left:756px;top:630px;width:1px;height:25px;background:#41c87a"></div>
<div style="position:absolute;left:1029px;top:630px;width:1px;height:25px;background:#41c87a"></div>
<div style="position:absolute;left:1148px;top:630px;width:1px;height:25px;background:#41c87a"></div>
<span class="tx lab" style="right:1089px;top:636px">确认人</span>
<span class="tx lab" style="right:696px;top:636px">确认日期</span>
<span class="tx lab" style="right:304px;top:636px">结单人</span>
<div style="position:absolute;left:245px;top:655px;width:118px;height:25px;background:#fffff2"></div>
<div style="position:absolute;left:637px;top:655px;width:119px;height:25px;background:#fffff2"></div>
<div style="position:absolute;left:1030px;top:655px;width:118px;height:25px;background:#fffff2"></div>
<div style="position:absolute;left:363px;top:655px;width:1px;height:25px;background:#41c87a"></div>
<div style="position:absolute;left:636px;top:655px;width:1px;height:25px;background:#41c87a"></div>
<div style="position:absolute;left:756px;top:655px;width:1px;height:25px;background:#41c87a"></div>
<div style="position:absolute;left:1029px;top:655px;width:1px;height:25px;background:#41c87a"></div>
<div style="position:absolute;left:1148px;top:655px;width:1px;height:25px;background:#41c87a"></div>
<span class="tx lab" style="right:1089px;top:661px">结单日期</span>
<span class="tx lab" style="right:696px;top:661px">最后更新人</span>
<span class="tx val gray" style="left:760px;top:659px">陈杰</span>
<span class="tx lab" style="right:304px;top:661px">最后更新日期</span>
<span class="tx val gray" style="left:1152px;top:659px">2017-06-01</span>
<div style="position:absolute;left:244px;top:588px;width:1190px;height:1px;background:#41c87a"></div>
<div style="position:absolute;left:244px;top:629px;width:1190px;height:1px;background:#41c87a"></div>
<div style="position:absolute;left:244px;top:654px;width:1190px;height:1px;background:#41c87a"></div>
<div style="position:absolute;left:244px;top:470px;width:1190px;height:210px;border:1px solid #41c87a;border-top:0;box-sizing:border-box"></div>
<div class="redbox" style="left:1071px;top:160px;width:161px;height:28px"></div>
<div class="redbox" style="left:305px;top:233px;width:108px;height:29px"></div>
<div class="redbox" style="left:693px;top:235px;width:161px;height:31px"></div></div>

</div>
</body></html>
